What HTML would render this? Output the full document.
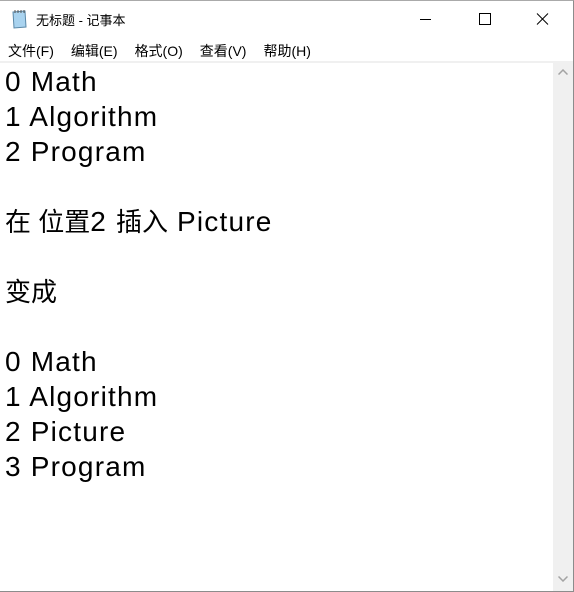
<!DOCTYPE html>
<html><head><meta charset="utf-8"><style>
*{margin:0;padding:0;box-sizing:border-box}
body{width:574px;height:592px;overflow:hidden;background:#fff;font-family:"Liberation Sans","Noto Sans CJK SC",sans-serif;position:relative}
.win{position:absolute;left:0;top:0;width:574px;height:592px;border:1px solid #8c8c8c;border-left:none;border-top:1px solid #aaa}
.title{position:absolute;left:36px;top:10px;font-size:13px;color:#000}
.menu{position:absolute;top:41px;left:8px;font-size:14px;color:#000;white-space:nowrap}
.menu span{margin-right:17px}
.sep{position:absolute;left:0;top:61px;width:573px;height:2px;background:#f0f0f0}
.sb{position:absolute;left:553px;top:63px;width:20px;height:528px;background:#f0f0f0}
.txt{position:absolute;left:5px;top:64px;font-size:28px;letter-spacing:1.2px;color:#000;white-space:pre}
.txt div{height:35px;line-height:35px;overflow:visible}
.c{font-size:26px;letter-spacing:0;line-height:35px}
</style></head><body>
<div class="win"></div>
<svg style="position:absolute;left:11px;top:9px" width="18" height="20" viewBox="0 0 18 20">
<path d="M2 3 L14 2 L15 18 L3 19 Z" fill="#a9d3ef" stroke="#5a88a8" stroke-width="1"/>
<path d="M4 1v3M7 1v3M10 1v3M13 1v3" stroke="#555" stroke-width="1"/>
</svg>
<div class="title">无标题 - 记事本</div>
<svg style="position:absolute;left:418px;top:12px" width="140" height="14" viewBox="0 0 140 14">
<path d="M2 7.5h11" stroke="#000" stroke-width="1"/>
<rect x="61.5" y="1.5" width="11" height="11" fill="none" stroke="#000"/>
<path d="M119 1.5l11 11M130 1.5l-11 11" stroke="#000" stroke-width="1"/>
</svg>
<div class="menu"><span>文件(F)</span><span>编辑(E)</span><span>格式(O)</span><span>查看(V)</span><span>帮助(H)</span></div>
<div class="sep"></div>
<div class="sb">
<svg style="position:absolute;left:5px;top:6px" width="10" height="6"><path d="M0.5 5.5l4.5-4.5 4.5 4.5" fill="none" stroke="#a3a3a3" stroke-width="1.5"/></svg>
<svg style="position:absolute;left:5px;top:513px" width="10" height="6"><path d="M0.5 0.5l4.5 4.5 4.5-4.5" fill="none" stroke="#a3a3a3" stroke-width="1.5"/></svg>
</div>
<div class="txt"><div>0 Math</div><div>1 Algorithm</div><div>2 Program</div><div></div><div><span class="c">在 位置</span>2 <span class="c">插入</span> Picture</div><div></div><div><span class="c">变成</span></div><div></div><div>0 Math</div><div>1 Algorithm</div><div>2 Picture</div><div>3 Program</div></div>
</body></html>
